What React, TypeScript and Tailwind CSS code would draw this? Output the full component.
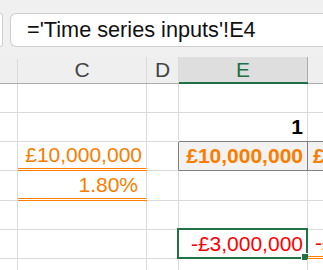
import React from "react";

const font = { fontFamily: '"Liberation Sans", Arial, sans-serif' };

function Cell({
  children,
  className = "",
}: {
  children?: React.ReactNode;
  className?: string;
}) {
  return (
    <div
      className={
        "relative flex items-center justify-end border-r border-b border-[#dadada] pr-[4px] text-[21px] leading-[24px] whitespace-nowrap overflow-visible " +
        className
      }
    >
      {children}
    </div>
  );
}

export default function App() {
  return (
    <div className="w-[323px] h-[270px] overflow-hidden bg-white" style={font}>
      {/* formula bar area */}
      <div className="h-[57px] bg-[#f0f0f0] pt-[13px] flex">
        <div className="w-[3px] h-[34px] bg-white border border-l-0 border-[#cfcfcf] rounded-r-[5px]" />
        <div className="ml-[7px] flex-1 h-[34px] bg-white border border-r-0 border-[#cfcfcf] rounded-l-[6px] flex items-center pl-[16px] text-[21.7px] leading-[24px] text-[#111] whitespace-nowrap">
          ='Time series inputs'!E4
        </div>
      </div>
      {/* column headers */}
      <div className="grid grid-cols-[18px_129px_32px_129px_1fr] h-[27px] bg-[#efefef] text-[21px] leading-[24px] border-b border-[#ababab]">
        <div className="border-r border-[#dadada] mt-[2px]" />
        <div className="border-r border-[#dadada] flex items-end justify-center pb-[1px] text-[#444]">
          C
        </div>
        <div className="border-r border-[#dadada] flex items-end justify-center pb-[1px] text-[#444]">
          D
        </div>
        <div className="relative bg-[#dedede] border-r border-[#ababab] flex items-end justify-center pb-[1px] text-[#1e7145]">
          E
          <div className="absolute left-0 right-[-1px] bottom-[-1px] h-[2px] bg-[#1e7145]" />
        </div>
        <div />
      </div>
      {/* rows */}
      <div className="grid grid-cols-[18px_129px_32px_129px_1fr] grid-rows-[29px_29px_29px_30px_29px_29px_29px]">
        {/* row 1 */}
        <Cell />
        <Cell />
        <Cell />
        <Cell />
        <Cell />
        {/* row 2 */}
        <Cell />
        <Cell />
        <Cell />
        <Cell className="font-bold text-black">1</Cell>
        <Cell />
        {/* row 3 */}
        <Cell />
        <Cell className="text-[#fa7d00] border-b-[3px] border-b-[#ff8001] border-double">
          £10,000,000
        </Cell>
        <Cell className="border-r-[#7f7f7f]" />
        <Cell className="font-bold text-[#fa7d00] bg-[#f2f2f2] border-t border-t-[#7f7f7f] -mt-[1px] border-b-[#7f7f7f] border-r-[#7f7f7f]">
          £10,000,000
        </Cell>
        <Cell className="font-bold text-[#fa7d00] bg-[#f2f2f2] border-t border-t-[#7f7f7f] -mt-[1px] border-b-[#7f7f7f] justify-start pl-[5px]">
          £10,000,000
        </Cell>
        {/* row 4 */}
        <Cell />
        <Cell className="text-[#fa7d00] border-b-[3px] border-b-[#ff8001] border-double pr-[8px]">
          1.80%
        </Cell>
        <Cell />
        <Cell />
        <Cell />
        {/* row 5 */}
        <Cell />
        <Cell />
        <Cell />
        <Cell />
        <Cell />
        {/* row 6 */}
        <Cell />
        <Cell />
        <Cell />
        <Cell className="text-[#ff0000]">
          -£3,000,000
          <div className="absolute left-[-2px] top-[-2px] right-[-1px] bottom-[-1px] border-2 border-[#217346]" />
          <div className="absolute right-[-2px] bottom-[-3px] w-[6px] h-[6px] bg-[#217346] border border-white box-content" />
        </Cell>
        <Cell className="text-[#ff0000] justify-start pl-[7px] border-b-[3px] border-b-[#ff8001] border-double">
          -£3,000,000
        </Cell>
        {/* row 7 */}
        <Cell />
        <Cell />
        <Cell />
        <Cell />
        <Cell />
      </div>
    </div>
  );
}
